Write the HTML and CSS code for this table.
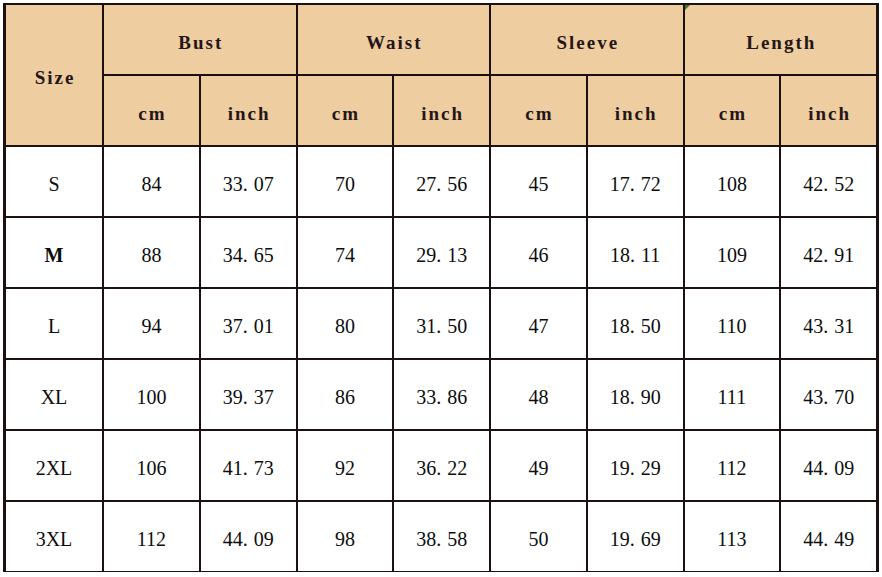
FILE: index.html
```html
<!DOCTYPE html>
<html lang="en">
<head>
<meta charset="utf-8">
<title>Size chart</title>
<link rel="stylesheet" href="styles.css">
</head>
<body>
<div class="chart">
  <div class="grid">
    <div class="cell head size">Size</div>
    <div class="cell head group">Bust</div>
    <div class="cell head group">Waist</div>
    <div class="cell head group">Sleeve</div>
    <div class="cell head group length">Length<span class="marker"></span></div>
    <div class="cell head unit">cm</div><div class="cell head unit">inch</div>
    <div class="cell head unit">cm</div><div class="cell head unit">inch</div>
    <div class="cell head unit">cm</div><div class="cell head unit">inch</div>
    <div class="cell head unit">cm</div><div class="cell head unit">inch</div>

    <div class="cell">S</div><div class="cell">84</div><div class="cell">33<span class="dot">.</span>07</div><div class="cell">70</div><div class="cell">27<span class="dot">.</span>56</div><div class="cell">45</div><div class="cell">17<span class="dot">.</span>72</div><div class="cell">108</div><div class="cell">42<span class="dot">.</span>52</div>
    <div class="cell bold">M</div><div class="cell">88</div><div class="cell">34<span class="dot">.</span>65</div><div class="cell">74</div><div class="cell">29<span class="dot">.</span>13</div><div class="cell">46</div><div class="cell">18<span class="dot">.</span>11</div><div class="cell">109</div><div class="cell">42<span class="dot">.</span>91</div>
    <div class="cell">L</div><div class="cell">94</div><div class="cell">37<span class="dot">.</span>01</div><div class="cell">80</div><div class="cell">31<span class="dot">.</span>50</div><div class="cell">47</div><div class="cell">18<span class="dot">.</span>50</div><div class="cell">110</div><div class="cell">43<span class="dot">.</span>31</div>
    <div class="cell">XL</div><div class="cell">100</div><div class="cell">39<span class="dot">.</span>37</div><div class="cell">86</div><div class="cell">33<span class="dot">.</span>86</div><div class="cell">48</div><div class="cell">18<span class="dot">.</span>90</div><div class="cell">111</div><div class="cell">43<span class="dot">.</span>70</div>
    <div class="cell">2XL</div><div class="cell">106</div><div class="cell">41<span class="dot">.</span>73</div><div class="cell">92</div><div class="cell">36<span class="dot">.</span>22</div><div class="cell">49</div><div class="cell">19<span class="dot">.</span>29</div><div class="cell">112</div><div class="cell">44<span class="dot">.</span>09</div>
    <div class="cell">3XL</div><div class="cell">112</div><div class="cell">44<span class="dot">.</span>09</div><div class="cell">98</div><div class="cell">38<span class="dot">.</span>58</div><div class="cell">50</div><div class="cell">19<span class="dot">.</span>69</div><div class="cell">113</div><div class="cell">44<span class="dot">.</span>49</div>
  </div>
</div>
</body>
</html>
```
FILE: styles.css
```css
html, body {
  margin: 0;
  padding: 0;
  background: #ffffff;
}
.chart {
  padding: 3px 3px 0 3px;
  width: 876px;
}
.grid {
  display: grid;
  grid-template-columns: 96px repeat(8, 1fr);
  grid-template-rows: 69px repeat(7, 69px);
  gap: 2px;
  background: #1c1010;
  border-top: 2px solid #1c1010;
  border-left: 3px solid #1c1010;
  border-right: 3px solid #1c1010;
  border-bottom: 3px solid #1c1010;
  box-sizing: border-box;
  width: 876px;
  height: 569px;
}
.cell {
  background: #ffffff;
  display: flex;
  align-items: center;
  justify-content: center;
  font-family: "Liberation Serif", "Times New Roman", serif;
  font-size: 20px;
  color: #0d0d0d;
  padding-top: 5px;
  box-sizing: border-box;
}
.cell.bold {
  font-weight: bold;
}
.dot {
  margin-right: 6px;
}
.head {
  background: #eecda1;
  font-family: "Liberation Serif", "Times New Roman", serif;
  font-weight: bold;
  font-size: 19px;
  letter-spacing: 2px;
  padding-left: 2px;
  padding-top: 6px;
  color: #241616;
}
.size {
  grid-row: span 2;
}
.group {
  grid-column: span 2;
}
.length {
  position: relative;
}
.marker {
  position: absolute;
  left: 0;
  top: 0;
  width: 0;
  height: 0;
  border-top: 5px solid #3d7a1f;
  border-right: 5px solid transparent;
}
```
